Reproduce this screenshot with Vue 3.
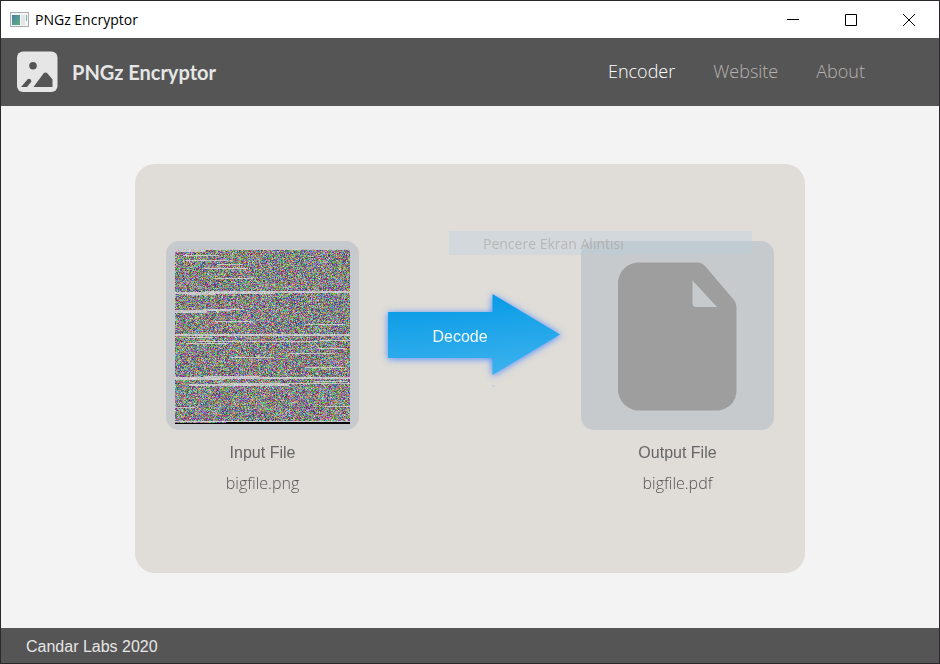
<script setup>
import { onMounted, ref } from 'vue'

const links = [
  { label: 'Encoder', active: true },
  { label: 'Website', active: false },
  { label: 'About', active: false }
]

const preview = ref(null)
const SIZE = 175

// Pale runs in the encoded data: row, first column, length, thickness
const streaks = [
  [0, 0, 175, 1], [1, 0, 30, 2], [6, 8, 36, 1], [11, 11, 42, 1], [15, 42, 26, 1],
  [19, 30, 43, 1], [29, 38, 40, 1], [42, 30, 145, 2], [43, 0, 100, 2], [45, 12, 28, 1],
  [60, 28, 41, 1], [61, 0, 56, 1], [62, 0, 32, 2], [72, 40, 38, 1], [75, 130, 40, 1],
  [85, 0, 175, 2], [88, 12, 26, 1], [91, 145, 30, 1], [92, 22, 120, 1], [94, 11, 42, 1],
  [99, 142, 28, 1], [104, 114, 45, 1], [108, 56, 42, 1], [118, 130, 40, 1],
  [127, 28, 56, 1], [128, 0, 175, 2], [130, 0, 50, 1], [132, 140, 32, 1],
  [134, 46, 129, 1], [135, 14, 100, 2], [158, 0, 20, 1], [157, 150, 25, 1], [172, 0, 175, 1]
]

onMounted(() => {
  const ctx = preview.value.getContext('2d')
  const image = ctx.createImageData(SIZE, SIZE)
  let seed = 20200417
  const random = () => {
    seed = (Math.imul(seed, 1664525) + 1013904223) >>> 0
    return seed / 4294967296
  }
  const channel = () => 25 + (random() * 0.75 + random() * 0.25) * 215
  const put = (x, y, r, g, b) => image.data.set([r, g, b, 255], (y * SIZE + x) * 4)
  for (let y = 0; y < SIZE; y++) {
    for (let x = 0; x < SIZE; x++) {
      put(x, y, channel(), channel(), channel())
    }
  }
  for (const [row, start, length, thickness] of streaks) {
    for (let y = row; y < row + thickness; y++) {
      for (let x = start; x < start + length; x++) {
        const v = 178 + random() * 40
        put(x, y, v, v, v)
      }
    }
  }
  for (let x = 0; x < SIZE; x++) {
    put(x, 174, 0, 0, 0)
    if (x > 50) put(x, 173, 0, 0, 0)
  }
  ctx.putImageData(image, 0, 0)
})
</script>

<template>
  <div class="window">
    <div class="titlebar">
      <svg class="app-icon" width="20" height="16" viewBox="0 0 20 16" aria-hidden="true">
        <defs>
          <linearGradient id="pane" x1="0" y1="0" x2="1" y2="1">
            <stop offset="0" stop-color="#4a7fa8" />
            <stop offset="1" stop-color="#5fb37c" />
          </linearGradient>
        </defs>
        <rect x="0.5" y="0.5" width="18" height="14" fill="#f4f5f6" stroke="#a9adb2" />
        <rect x="2" y="3" width="8" height="10" fill="url(#pane)" />
        <rect x="11" y="3" width="4" height="10" fill="#e3e5e8" />
        <rect x="16" y="3" width="1" height="6" fill="#6fb6a0" />
      </svg>
      <span class="window-title">PNGz Encryptor</span>
      <div class="window-controls">
        <button type="button" aria-label="Minimize">
          <svg width="14" height="14" viewBox="0 0 14 14"><path d="M1 6.500H13" /></svg>
        </button>
        <button type="button" aria-label="Maximize">
          <svg width="14" height="14" viewBox="0 0 14 14"><path d="M1.500 1.500H12.500V12.500H1.500Z" /></svg>
        </button>
        <button type="button" aria-label="Close">
          <svg width="14" height="14" viewBox="0 0 14 14"><path d="M1 1L13 13M13 1L1 13" /></svg>
        </button>
      </div>
    </div>

    <header class="header">
      <svg class="logo" width="42" height="42" viewBox="0 0 42 42" aria-hidden="true">
        <rect x="1" y="0.500" width="40.500" height="40.500" rx="6" fill="#e6e6e6" />
        <circle cx="17" cy="14.700" r="3.800" fill="#555" />
        <path d="M5 36L11.500 28.500Q13 27 14.500 28.500L15.500 30.500L11 36Z" fill="#555" />
        <path d="M17.500 36L27.500 22.500Q29.500 20.500 31.500 22.500L36.500 28.500V36Z" fill="#555" />
      </svg>
      <h1>PNGz Encryptor</h1>
      <nav>
        <a v-for="link in links" :key="link.label" href="#" :class="{ active: link.active }">{{ link.label }}</a>
      </nav>
    </header>

    <main>
      <section class="card">
        <figure>
          <div class="frame">
            <canvas ref="preview" :width="SIZE" :height="SIZE"></canvas>
          </div>
          <figcaption>
            <span class="caption">Input File</span>
            <span class="filename">bigfile.png</span>
          </figcaption>
        </figure>

        <button type="button" class="decode">
          <svg width="200" height="110" viewBox="0 0 200 110" aria-hidden="true">
            <defs>
              <linearGradient id="arrow" x1="0" y1="0" x2="0.200" y2="1">
                <stop offset="0" stop-color="#0298e5" />
                <stop offset="1" stop-color="#38b0ed" />
              </linearGradient>
              <filter id="glow" x="-20%" y="-20%" width="140%" height="140%">
                <feGaussianBlur stdDeviation="3.500" />
              </filter>
            </defs>
            <path d="M18 33H122V15L191 55L122 96V79H18Z" fill="#4c8cff" filter="url(#glow)" />
            <path d="M18 32H122.500V14L190 54.500L122.500 95V78H18Z" fill="url(#arrow)" />
            <path d="M122 106H125" stroke="#b5cbdb" />
          </svg>
          <span>Decode</span>
        </button>

        <figure>
          <div class="frame">
            <svg width="120" height="149" viewBox="0 0 120 149" aria-hidden="true">
              <path
                fill="#9e9e9e"
                fill-rule="evenodd"
                d="M19 0.500H80Q84 0.500 87 4L116 38Q118.500 41 118.500 45V130Q117 145 101 148.500H18Q3 145 0 130V19Q3 3 19 0.500ZM74.500 18.500V41Q74.500 45 78.500 45H99Z"
              />
            </svg>
          </div>
          <figcaption>
            <span class="caption">Output File</span>
            <span class="filename">bigfile.pdf</span>
          </figcaption>
        </figure>

        <div class="ghost">Pencere Ekran Alıntısı</div>
      </section>
    </main>

    <footer>Candar Labs 2020</footer>
  </div>
</template>

<style>
body {
  margin: 0;
}
</style>

<style scoped>
.window {
  box-sizing: border-box;
  min-height: 100vh;
  display: flex;
  flex-direction: column;
  border: 1px solid #2b282b;
  background: #f3f3f3;
  font-family: "Liberation Sans", Arial, sans-serif;
  font-size: 16px;
}

button {
  border: 0;
  padding: 0;
  background: none;
  font: inherit;
}

.titlebar {
  display: flex;
  align-items: center;
  height: 37px;
  padding-left: 9px;
  background: #fff;
}

.window-title {
  margin-left: 5px;
  color: #000;
  font-family: "Open Sans", sans-serif;
  font-size: 14px;
}

.window-controls {
  display: flex;
  height: 100%;
  margin: 0 1px 0 auto;
}

.window-controls button {
  display: grid;
  place-items: center;
  width: 58px;
}

.window-controls path {
  fill: none;
  stroke: #000;
}

.header {
  display: flex;
  align-items: center;
  height: 68px;
  padding: 0 74px 0 15px;
  background: #555;
}

h1 {
  margin: 0 0 0 14px;
  color: #e6e6e6;
  font-family: Lato, sans-serif;
  font-size: 20px;
  font-weight: 700;
  line-height: 24px;
}

nav {
  display: flex;
  gap: 38px;
  margin-left: auto;
  padding-bottom: 2px;
}

nav a {
  color: #b8b2b0;
  font-family: "Open Sans", sans-serif;
  font-size: 18px;
  font-weight: 300;
  text-decoration: none;
}

nav a.active {
  color: #fff;
}

main {
  flex: 1;
  display: flex;
  flex-direction: column;
  padding: 58px 134px 55px;
}

.card {
  position: relative;
  flex: 1;
  display: flex;
  justify-content: space-between;
  align-items: flex-start;
  padding: 77px 31px;
  border-radius: 20px;
  background: #e0ddd8;
}

figure {
  margin: 0;
}

.frame {
  display: grid;
  place-items: center;
  box-sizing: border-box;
  width: 193px;
  height: 189px;
  padding-top: 2px;
  border-radius: 13px;
  background: #c7cacc;
}

canvas {
  display: block;
}

figcaption {
  display: flex;
  flex-direction: column;
  align-items: center;
  gap: 6px;
  padding-top: 11px;
  line-height: 24px;
}

.caption {
  color: #666;
}

.filename {
  color: #555;
  font-family: "Open Sans", sans-serif;
  font-size: 16px;
  font-weight: 300;
}

.decode {
  display: grid;
  place-items: center;
  margin-top: 39px;
  color: #f2faff;
}

.decode svg,
.decode span {
  grid-area: 1 / 1;
}

.decode span {
  padding: 3px 20px 0 0;
}

.ghost {
  position: absolute;
  top: 67px;
  left: 314px;
  width: 303px;
  height: 24px;
  box-sizing: border-box;
  padding-left: 34px;
  background: rgba(180, 206, 226, 0.3);
  color: rgba(160, 150, 140, 0.5);
  font-family: "Open Sans", sans-serif;
  font-size: 14px;
  line-height: 26px;
}

footer {
  height: 35px;
  padding-left: 25px;
  background: #555;
  color: #e6e6e6;
  line-height: 37px;
}
</style>
